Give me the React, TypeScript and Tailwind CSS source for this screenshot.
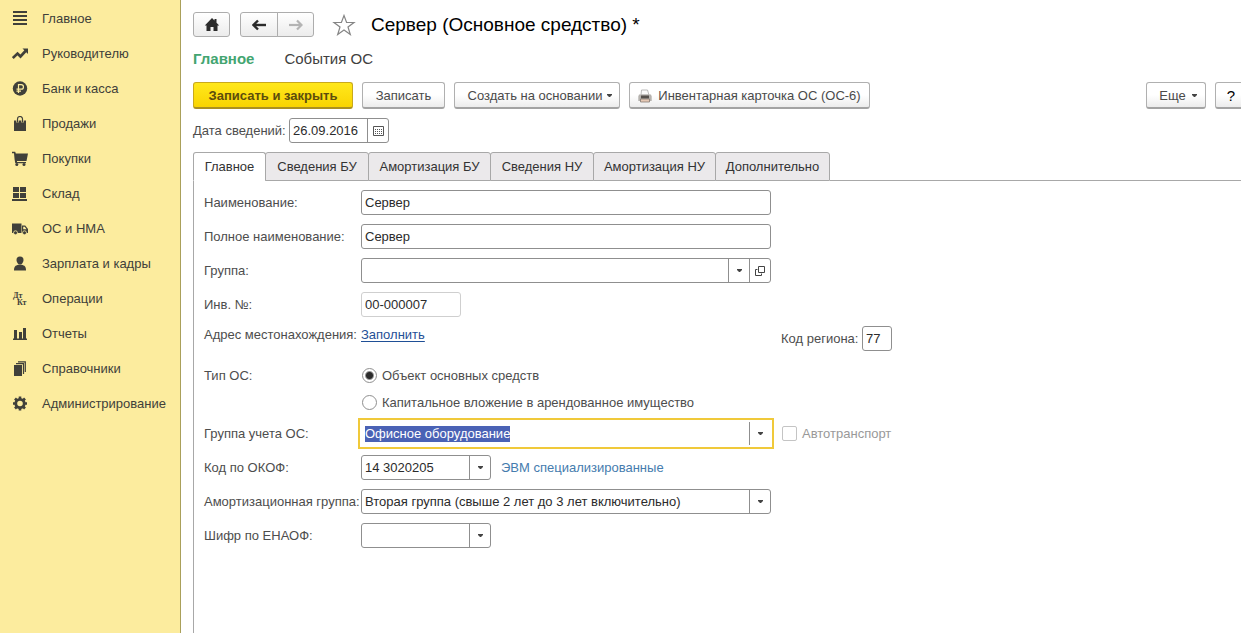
import { useEffect, useRef } from "react";
import type { ReactNode } from "react";
import clsx from "clsx";

const menu: { text: string; icon: ReactNode }[] = [
  {
    text: "Главное",
    icon: <path d="M1 0h14v2H1zM1 4h14v2H1zM1 8h14v2H1zM1 12h14v2H1z" />,
  },
  {
    text: "Руководителю",
    icon: (
      <>
        <path d="M.8 12 5.500 7.500 8.500 10.500 14 4.500" fill="none" stroke="currentColor" strokeWidth="2.600" />
        <path d="M10.500 2.500H16V8z" />
      </>
    ),
  },
  {
    text: "Банк и касса",
    icon: (
      <>
        <circle cx="8" cy="7.500" r="7.200" />
        <path
          d="M6.500 12V3.700h2.700a2.200 2.200 0 0 1 0 4.500H4.500M4.500 10.100h4.500"
          fill="none"
          stroke="#fcec9e"
          strokeWidth="1.200"
        />
      </>
    ),
  },
  {
    text: "Продажи",
    icon: (
      <>
        <path d="M2 4.500h12V15H2z" />
        <path d="M5.500 6.500V3.500a2.500 2.500 0 0 1 5 0v3" fill="none" stroke="#fcec9e" strokeWidth="2.400" />
        <path d="M5.500 6.500V3a2.500 2.500 0 0 1 5 0v3.500" fill="none" stroke="currentColor" strokeWidth="1.200" />
      </>
    ),
  },
  {
    text: "Покупки",
    icon: (
      <>
        <path d="M0 .8h3.200l.6 1.700H16L14.500 10H5v1h9v1.200H3.300L2.600 8.500 2 2.300H0z" />
        <circle cx="4.800" cy="13.400" r="1.500" />
        <circle cx="12" cy="13.400" r="1.500" />
      </>
    ),
  },
  {
    text: "Склад",
    icon: <path d="M1 1h6v5H1zM8 1h6v5H8zM1 7h6v5H1zM8 7h6v5H8zM0 13h15v2H0z" />,
  },
  {
    text: "ОС и НМА",
    icon: (
      <>
        <path d="M0 2.500h9.500V12H0z" />
        <path
          fillRule="evenodd"
          d="M10 4.500h3.200L16 8v4h-6zM11.200 5.700v2.500h3.300l-1.700-2.500z"
        />
        <circle cx="3.500" cy="11.800" r="2" stroke="#fcec9e" strokeWidth=".8" />
        <circle cx="12.500" cy="11.800" r="2" stroke="#fcec9e" strokeWidth=".8" />
      </>
    ),
  },
  {
    text: "Зарплата и кадры",
    icon: (
      <>
        <path d="M8 .5c2.500 0 3.500 1.500 3.500 3.500S10 8.600 8 8.600 4.500 6 4.500 4 5.500.5 8 .5z" />
        <path d="M2 14.500c0-3.800 1.200-5 4.500-5.700h3c3.300.7 4.500 1.900 4.500 5.700z" />
      </>
    ),
  },
  {
    text: "Операции",
    icon: (
      <g fontFamily="Liberation Serif" fontWeight="bold" fontSize="8">
        <text x="1" y="7">Дт</text>
        <text x="5" y="14">Кт</text>
      </g>
    ),
  },
  {
    text: "Отчеты",
    icon: <path d="M2 4h3v9H2zM7 6h3v7H7zM11 2h3v11h-3zM1 12.500h14V14H1z" />,
  },
  {
    text: "Справочники",
    icon: (
      <>
        <path d="M2 4h8v11H2z" />
        <path d="M4 2.600h7.500V13M6 .8h7.300V11" fill="none" stroke="currentColor" strokeWidth="1.200" />
      </>
    ),
  },
  {
    text: "Администрирование",
    icon: (
      <>
        <circle cx="8" cy="7.500" r="4.200" fill="none" stroke="currentColor" strokeWidth="2.800" />
        <path
          d="M8 .5V3M8 12v2.500M1 7.500h2.500M12.500 7.500H15M3 2.500l2 2M11 10.500l2 2M3 12.500l2-2M11 4.500l2-2"
          stroke="currentColor"
          strokeWidth="2.600"
        />
      </>
    ),
  },
];

const tabs = [
  { text: "Главное", width: "w-[73px]" },
  { text: "Сведения БУ", width: "w-[104px]" },
  { text: "Амортизация БУ", width: "w-[123px]" },
  { text: "Сведения НУ", width: "w-[104px]" },
  { text: "Амортизация НУ", width: "w-[123px]" },
  { text: "Дополнительно", width: "w-[115px]" },
];

const fieldBox = "flex h-[25px] rounded-[3px] border border-[#8f8f8f] bg-white";
const fieldText = "min-w-0 flex-1 bg-transparent px-[3px] text-[#2b2b2b] outline-none";

function Caret() {
  return (
    <svg width="5" height="3" viewBox="0 0 5 3" fill="#444" aria-hidden="true">
      <path d="M0 0h5v1L3 3H2L0 1z" />
    </svg>
  );
}

function Button({
  primary,
  className,
  children,
}: {
  primary?: boolean;
  className?: string;
  children: ReactNode;
}) {
  return (
    <button
      type="button"
      className={clsx(
        "flex h-[27px] shrink-0 items-center justify-center whitespace-nowrap rounded-[3px] border border-b-2 bg-linear-to-b pt-px",
        primary
          ? "border-[#c9a91c] border-b-[#ab9020] from-[#ffe81a] to-[#f9d400] font-bold text-[#5c4d0c]"
          : "border-[#b0b0b0] border-b-[#a3a3a3] from-white from-50% to-[#ececec] text-[#4a4a4a]",
        className
      )}
    >
      {children}
    </button>
  );
}

function Row({ label, htmlFor, children }: { label: string; htmlFor: string; children: ReactNode }) {
  return (
    <div className="flex h-[25px] items-center">
      <label htmlFor={htmlFor} className="w-[157px] shrink-0 whitespace-nowrap">
        {label}
      </label>
      {children}
    </div>
  );
}

function Select({ id, value, className }: { id: string; value: string; className: string }) {
  return (
    <div className={clsx(fieldBox, "relative", className)}>
      <select id={id} defaultValue={value} className={clsx(fieldText, "appearance-none")}>
        <option value={value}>{value}</option>
      </select>
      <span className="pointer-events-none absolute inset-y-0 right-0 flex w-[21px] items-center justify-center border-l border-[#8f8f8f]">
        <Caret />
      </span>
    </div>
  );
}

function Sidebar() {
  return (
    <nav className="w-[181px] shrink-0 border-r border-[#aaa05a] bg-[#fcec9e] pt-px text-[#40403a]">
      <ul>
        {menu.map((item) => (
          <li key={item.text}>
            <a href="#" className="flex h-[35px] items-center gap-[14px] pl-3">
              <svg width="16" height="16" viewBox="0 0 16 16" fill="currentColor" aria-hidden="true">
                {item.icon}
              </svg>
              {item.text}
            </a>
          </li>
        ))}
      </ul>
    </nav>
  );
}

function TitleBar() {
  const box = "border border-[#adadad] bg-linear-to-b from-white to-[#ececec] flex items-center justify-center h-[25px]";
  return (
    <div className="flex items-center">
      <button type="button" aria-label="Домой" className={clsx(box, "w-[37px] rounded-[3px]")}>
        <svg width="16" height="14" viewBox="0 0 16 14" fill="#2b2b2b" aria-hidden="true">
          <path d="M8 0 .8 7.500h1.700V13h4V9h3v4h4V7.500h1.700L12.500 4.700V1h-2v1.600z" />
        </svg>
      </button>
      <div className="ml-[10px] flex">
        <button type="button" aria-label="Назад" className={clsx(box, "w-[38px] rounded-l-[3px]")}>
          <svg width="14" height="12" viewBox="0 0 14 12" aria-hidden="true">
            <path d="M14 6H3" stroke="#2b2b2b" strokeWidth="2.400" />
            <path d="M6 1.500 1.500 6 6 10.500" fill="none" stroke="#2b2b2b" strokeWidth="2.400" />
          </svg>
        </button>
        <button
          type="button"
          disabled
          aria-label="Вперед"
          className={clsx(box, "-ml-px w-[37px] rounded-r-[3px]")}
        >
          <svg width="14" height="12" viewBox="0 0 14 12" aria-hidden="true">
            <path d="M0 6h11" stroke="#b4b4b4" strokeWidth="2.200" />
            <path d="M8 1.500 12.500 6 8 10.500" fill="none" stroke="#b4b4b4" strokeWidth="2.200" />
          </svg>
        </button>
      </div>
      <button type="button" aria-label="В избранное" className="ml-[18px]">
        <svg width="24" height="22" viewBox="0 0 24 22" fill="#fff" stroke="#858585" strokeWidth="1.200" aria-hidden="true">
          <path d="M12 1.500l2.600 7H22l-6 4.500 2.300 7.500L12 16l-6.300 4.500L8 13 2 8.500h7.400z" />
        </svg>
      </button>
      <h1 className="ml-[15px] whitespace-nowrap pt-px text-[19px] leading-6 text-black">
        Сервер (Основное средство) *
      </h1>
    </div>
  );
}

function Toolbar() {
  return (
    <div className="mt-3 flex gap-[9px]">
      <Button primary className="w-[160px]">
        Записать и закрыть
      </Button>
      <Button className="w-[83px]">Записать</Button>
      <Button className="w-[166px] gap-[5px] pl-[6px]">
        Создать на основании <Caret />
      </Button>
      <Button className="w-[241px] gap-[6px]">
        <svg width="14" height="14" viewBox="0 0 14 14" aria-hidden="true">
          <path d="M3.500 1h6l1.500 5H3z" fill="#fafafa" stroke="#a9a9a9" strokeWidth=".8" />
          <path d="M1 5.500h12l.7 2V12H.3V7.500z" fill="#b5b2ae" />
          <path d="M3 6.500h8v3H3z" fill="#55504c" />
          <path d="M2.500 10h9v3h-9z" fill="#e6c9b5" stroke="#857b74" strokeWidth=".8" />
        </svg>
        Инвентарная карточка ОС (ОС-6)
      </Button>
      <Button className="ml-auto w-[60px] gap-[6px] pl-1">
        Еще <Caret />
      </Button>
      <Button className="-mr-[10px] w-[36px] pr-1 text-[15px] text-black">?</Button>
    </div>
  );
}

function Radio({ text, checked }: { text: string; checked?: boolean }) {
  return (
    <label className="flex h-[25px] items-center gap-[5px] whitespace-nowrap">
      <input
        type="radio"
        name="assetType"
        defaultChecked={checked}
        className="ml-px h-[15px] w-[15px] appearance-none rounded-full border border-[#8f8f8f] bg-white checked:bg-[radial-gradient(circle,#2b2b2b_3px,#fff_5px)]"
      />
      {text}
    </label>
  );
}

function AssetForm() {
  const groupRef = useRef<HTMLInputElement>(null);

  // the accounting group is the active field when the form opens
  useEffect(() => {
    groupRef.current?.focus();
    groupRef.current?.select();
  }, []);

  return (
    <form className="flex-1 border-l border-[#a8a8a8] pt-[9px] pl-[10px] text-[#4d4d4d]">
      <div className="flex flex-col gap-[9px]">
        <Row label="Наименование:" htmlFor="name">
          <div className={clsx(fieldBox, "w-[410px]")}>
            <input id="name" defaultValue="Сервер" className={fieldText} />
          </div>
        </Row>
        <Row label="Полное наименование:" htmlFor="fullName">
          <div className={clsx(fieldBox, "w-[410px]")}>
            <input id="fullName" defaultValue="Сервер" className={fieldText} />
          </div>
        </Row>
        <Row label="Группа:" htmlFor="group">
          <div className={clsx(fieldBox, "w-[410px]")}>
            <input id="group" className={fieldText} />
            <button
              type="button"
              aria-label="Выбрать"
              className="flex w-[21px] items-center justify-center border-l border-[#8f8f8f]"
            >
              <Caret />
            </button>
            <button
              type="button"
              aria-label="Открыть"
              className="flex w-[21px] items-center justify-center border-l border-[#8f8f8f]"
            >
              <svg width="10" height="10" viewBox="0 0 10 10" fill="none" stroke="#444" aria-hidden="true">
                <path d="M3.500.5h6v6h-6zM2.500 3.500h-2v6h6v-2" />
              </svg>
            </button>
          </div>
        </Row>
        <Row label="Инв. №:" htmlFor="number">
          <div className="flex h-[25px] w-[100px] rounded-[3px] border border-[#cfcfcf]">
            <input id="number" readOnly defaultValue="00-000007" className={fieldText} />
          </div>
        </Row>
        <div className="flex h-[25px]">
          <span className="w-[157px] shrink-0 whitespace-nowrap leading-[18px]">Адрес местонахождения:</span>
          <div className="w-[420px] leading-[18px]">
            <a href="#" className="text-[#1f4f96] underline underline-offset-2">
              Заполнить
            </a>
          </div>
          <label htmlFor="region" className="mr-1 w-[77px] whitespace-nowrap leading-[25px]">
            Код региона:
          </label>
          <div className={clsx(fieldBox, "w-[30px]")}>
            <input id="region" defaultValue="77" className={fieldText} />
          </div>
        </div>
      </div>

      <fieldset className="mt-3 flex">
        <legend className="float-left w-[157px] leading-[25px]">Тип ОС:</legend>
        <div className="flex flex-col gap-0.5">
          <Radio text="Объект основных средств" checked />
          <Radio text="Капитальное вложение в арендованное имущество" />
        </div>
      </fieldset>

      <div className="mt-[6px] flex flex-col gap-[9px]">
        <Row label="Группа учета ОС:" htmlFor="accountGroup">
          <div className="flex h-[25px] w-[410px] items-center border border-transparent bg-white outline-2 outline-offset-1 outline-[#f0c93a]">
            <input
              id="accountGroup"
              ref={groupRef}
              defaultValue="Офисное оборудование"
              className={clsx(fieldText, "leading-4 selection:bg-[#4a62b5] selection:text-white")}
            />
            <button
              type="button"
              aria-label="Выбрать"
              className="flex w-[21px] items-center justify-center self-stretch border-l border-[#8f8f8f]"
            >
              <Caret />
            </button>
          </div>
          <label className="ml-[11px] flex items-center gap-[5px] text-[#999]">
            <input
              type="checkbox"
              disabled
              className="h-[15px] w-[15px] appearance-none rounded-[2px] border border-[#c4c4c4] bg-white"
            />
            Автотранспорт
          </label>
        </Row>
        <Row label="Код по ОКОФ:" htmlFor="okof">
          <Select id="okof" value="14 3020205" className="w-[130px]" />
          <span className="ml-[10px] text-[#457cae]">ЭВМ специализированные</span>
        </Row>
        <Row label="Амортизационная группа:" htmlFor="depreciation">
          <Select
            id="depreciation"
            value="Вторая группа (свыше 2 лет до 3 лет включительно)"
            className="w-[410px]"
          />
        </Row>
        <Row label="Шифр по ЕНАОФ:" htmlFor="enaof">
          <Select id="enaof" value="" className="w-[130px]" />
        </Row>
      </div>
    </form>
  );
}

export default function App() {
  return (
    <div className="flex min-h-screen bg-white font-['Liberation_Sans',Arial,sans-serif] text-[13px] leading-[18px]">
      <Sidebar />
      <main className="flex min-w-0 flex-1 flex-col overflow-hidden pt-3 pl-3">
        <TitleBar />

        <div className="mt-[11px] flex gap-[30px] text-[15px] leading-[22px]">
          <a href="#" className="font-bold text-[#43a571]">
            Главное
          </a>
          <a href="#" className="text-[#404040]">
            События ОС
          </a>
        </div>

        <Toolbar />

        <div className="mt-[9px] flex items-center text-[#4d4d4d]">
          <label htmlFor="date" className="w-[96px] whitespace-nowrap">
            Дата сведений:
          </label>
          <div className={clsx(fieldBox, "w-[100px]")}>
            <input id="date" defaultValue="26.09.2016" className={fieldText} />
            <button
              type="button"
              aria-label="Календарь"
              className="flex w-[21px] items-center justify-center border-l border-[#8f8f8f]"
            >
              <svg width="11" height="10" viewBox="0 0 11 10" fill="none" stroke="#555" aria-hidden="true">
                <path d="M.5.500h10v9H.5z" />
                <path d="M2 3.500h7M2 5.500h7M2 7.500h7" strokeDasharray="1 1" />
              </svg>
            </button>
          </div>
        </div>

        <div role="tablist" className="mt-[9px] flex text-[#333]">
          {tabs.map((tab, index) => (
            <button
              key={tab.text}
              type="button"
              role="tab"
              aria-selected={index === 0}
              className={clsx(
                "h-[29px] shrink-0 whitespace-nowrap rounded-t-[3px] border border-[#a8a8a8]",
                tab.width,
                index === 0 ? "border-b-white bg-white" : "-ml-px bg-[#ebe9eb]"
              )}
            >
              {tab.text}
            </button>
          ))}
          <span className="flex-1 border-b border-[#a8a8a8]" />
        </div>

        <AssetForm />
      </main>
    </div>
  );
}
